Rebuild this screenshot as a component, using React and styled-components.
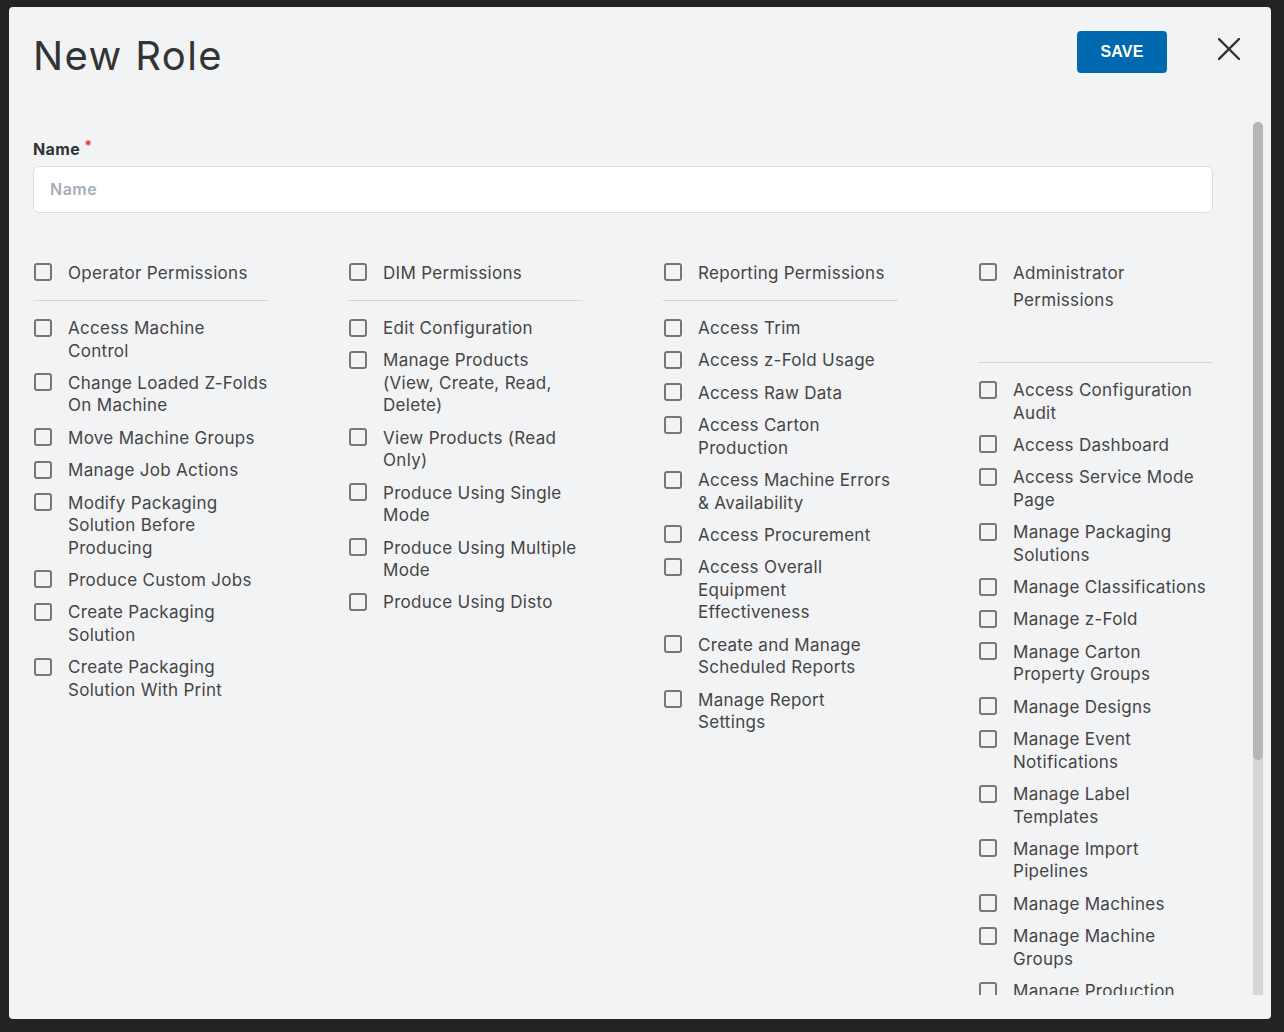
import React from "react";
import styled, { createGlobalStyle } from "styled-components";

const GlobalStyle = createGlobalStyle`
  html, body {
    margin: 0;
    padding: 0;
    background: #232323;
  }
  body {
    font-family: Inter, "Noto Sans", sans-serif;
  }
`;

const Backdrop = styled.div`
  box-sizing: border-box;
  height: 1032px;
  padding: 7px 13px 13px 9px;
`;

const Modal = styled.div`
  box-sizing: border-box;
  height: 1012px;
  display: flex;
  flex-direction: column;
  padding: 24px 8px 24px 24px;
  background: #f2f3f5;
  border-radius: 4px;
`;

const Header = styled.header`
  display: flex;
  align-items: flex-start;
  height: 49px;
  padding-right: 14px;
`;

const Title = styled.h1`
  flex: 1;
  margin: 1px 0 0;
  font-size: 40px;
  line-height: 48px;
  font-weight: 400;
  letter-spacing: 1.4px;
  color: #333;
`;

const SaveButton = styled.button`
  width: 90px;
  height: 42px;
  border: none;
  border-radius: 4px;
  background: #0068ae;
  color: #fff;
  font: bold 16px "Liberation Sans", Arial, sans-serif;
  letter-spacing: 0.2px;
  cursor: pointer;
`;

const CloseButton = styled.button`
  display: flex;
  align-items: center;
  justify-content: center;
  width: 40px;
  height: 40px;
  margin: -2px 0 0 42px;
  padding: 0;
  border: none;
  background: none;
  color: #333;
  cursor: pointer;
`;

const Body = styled.div`
  flex: 1;
  min-height: 0;
  display: flex;
  margin-top: 42px;
`;

const Scroll = styled.div`
  flex: 1;
  overflow-y: auto;
  scrollbar-width: none;
`;

// drawn scroll bar, the page is photographed without native ones
const ScrollTrack = styled.div`
  flex: 0 0 10px;
  background: #d6d6d6;
  border-radius: 5px 5px 0 0;
`;

const ScrollThumb = styled.div`
  height: 638px;
  background: #b5b5b5;
  border-radius: 5px;
`;

const Content = styled.div`
  width: 1180px;
  padding: 17px 0 40px;
`;

const FieldLabel = styled.label`
  display: block;
  font-size: 16px;
  line-height: 20px;
  font-weight: 700;
  letter-spacing: 0.4px;
  color: #333;
`;

const Required = styled.span`
  position: relative;
  top: -4px;
  margin-left: 4px;
  font-size: 14px;
  color: #e63b3f;
`;

const TextInput = styled.input`
  display: block;
  box-sizing: border-box;
  width: 100%;
  height: 47px;
  margin-top: 6px;
  padding: 0 16px 1px;
  border: 1px solid #dcdde0;
  border-radius: 6px;
  background: #fff;
  font-family: inherit;
  font-size: 16px;
  font-weight: 600;
  letter-spacing: 0.5px;
  color: #333;
  outline: none;

  &::placeholder {
    color: #a5aeb7;
  }
`;

const Groups = styled.div`
  display: grid;
  grid-template-columns: repeat(4, 235px);
  column-gap: 80px;
  align-items: start;
  margin-top: 47px;
`;

const Group = styled.section`
  display: flex;
  flex-direction: column;
`;

const GroupHeader = styled.label`
  display: flex;
  gap: 16px;
  padding-bottom: ${({ $tall }) => ($tall ? 48 : 13)}px;
  border-bottom: 1px solid #d4d4d4;
  font-size: 17px;
  line-height: 27px;
  letter-spacing: 0.3px;
  color: #454545;
  white-space: pre-line;
`;

const ItemList = styled.div`
  display: flex;
  flex-direction: column;
  gap: 9.9px;
  margin-top: 16px;
`;

const Item = styled.label`
  display: flex;
  gap: 16px;
  font-size: 17px;
  line-height: 22.5px;
  letter-spacing: 0.3px;
  color: #454545;
  white-space: pre-line;
`;

const Checkbox = styled.input.attrs({ type: "checkbox" })`
  appearance: none;
  flex-shrink: 0;
  box-sizing: border-box;
  width: 18px;
  height: 18px;
  margin: ${({ $offset }) => $offset}px 0 0 1px;
  border: 2px solid #777;
  border-radius: 3px;
  background: transparent;
`;

const groups = [
  {
    title: "Operator Permissions",
    items: [
      "Access Machine\nControl",
      "Change Loaded Z-Folds\nOn Machine",
      "Move Machine Groups",
      "Manage Job Actions",
      "Modify Packaging\nSolution Before\nProducing",
      "Produce Custom Jobs",
      "Create Packaging\nSolution",
      "Create Packaging\nSolution With Print",
    ],
  },
  {
    title: "DIM Permissions",
    items: [
      "Edit Configuration",
      "Manage Products\n(View, Create, Read,\nDelete)",
      "View Products (Read\nOnly)",
      "Produce Using Single\nMode",
      "Produce Using Multiple\nMode",
      "Produce Using Disto",
    ],
  },
  {
    title: "Reporting Permissions",
    items: [
      "Access Trim",
      "Access z-Fold Usage",
      "Access Raw Data",
      "Access Carton\nProduction",
      "Access Machine Errors\n& Availability",
      "Access Procurement",
      "Access Overall\nEquipment\nEffectiveness",
      "Create and Manage\nScheduled Reports",
      "Manage Report\nSettings",
    ],
  },
  {
    title: "Administrator\nPermissions",
    tall: true,
    items: [
      "Access Configuration\nAudit",
      "Access Dashboard",
      "Access Service Mode\nPage",
      "Manage Packaging\nSolutions",
      "Manage Classifications",
      "Manage z-Fold",
      "Manage Carton\nProperty Groups",
      "Manage Designs",
      "Manage Event\nNotifications",
      "Manage Label\nTemplates",
      "Manage Import\nPipelines",
      "Manage Machines",
      "Manage Machine\nGroups",
      "Manage Production\nGroups",
      "Manage Roles",
      "Manage Users",
      "Manage Settings",
      "Manage Plugins",
      "Manage Search\nConfiguration",
    ],
  },
];

function CloseIcon() {
  return (
    <svg width="22" height="22" viewBox="0 0 22 22" fill="none">
      <path
        d="M1 1L21 21M21 1L1 21"
        stroke="currentColor"
        strokeWidth="2.4"
        strokeLinecap="square"
      />
    </svg>
  );
}

export default function App() {
  return (
    <>
      <GlobalStyle />
      <Backdrop>
        <Modal>
          <Header>
            <Title>New Role</Title>
            <SaveButton>SAVE</SaveButton>
            <CloseButton aria-label="Close">
              <CloseIcon />
            </CloseButton>
          </Header>
          <Body>
            <Scroll>
              <Content>
                <FieldLabel htmlFor="role-name">
                  Name<Required>*</Required>
                </FieldLabel>
                <TextInput id="role-name" placeholder="Name" />
                <Groups>
                  {groups.map((group) => (
                    <Group key={group.title}>
                      <GroupHeader $tall={group.tall}>
                        <Checkbox $offset={2.5} />
                        {group.title}
                      </GroupHeader>
                      <ItemList>
                        {group.items.map((item) => (
                          <Item key={item}>
                            <Checkbox $offset={1.5} />
                            {item}
                          </Item>
                        ))}
                      </ItemList>
                    </Group>
                  ))}
                </Groups>
              </Content>
            </Scroll>
            <ScrollTrack>
              <ScrollThumb />
            </ScrollTrack>
          </Body>
        </Modal>
      </Backdrop>
    </>
  );
}
